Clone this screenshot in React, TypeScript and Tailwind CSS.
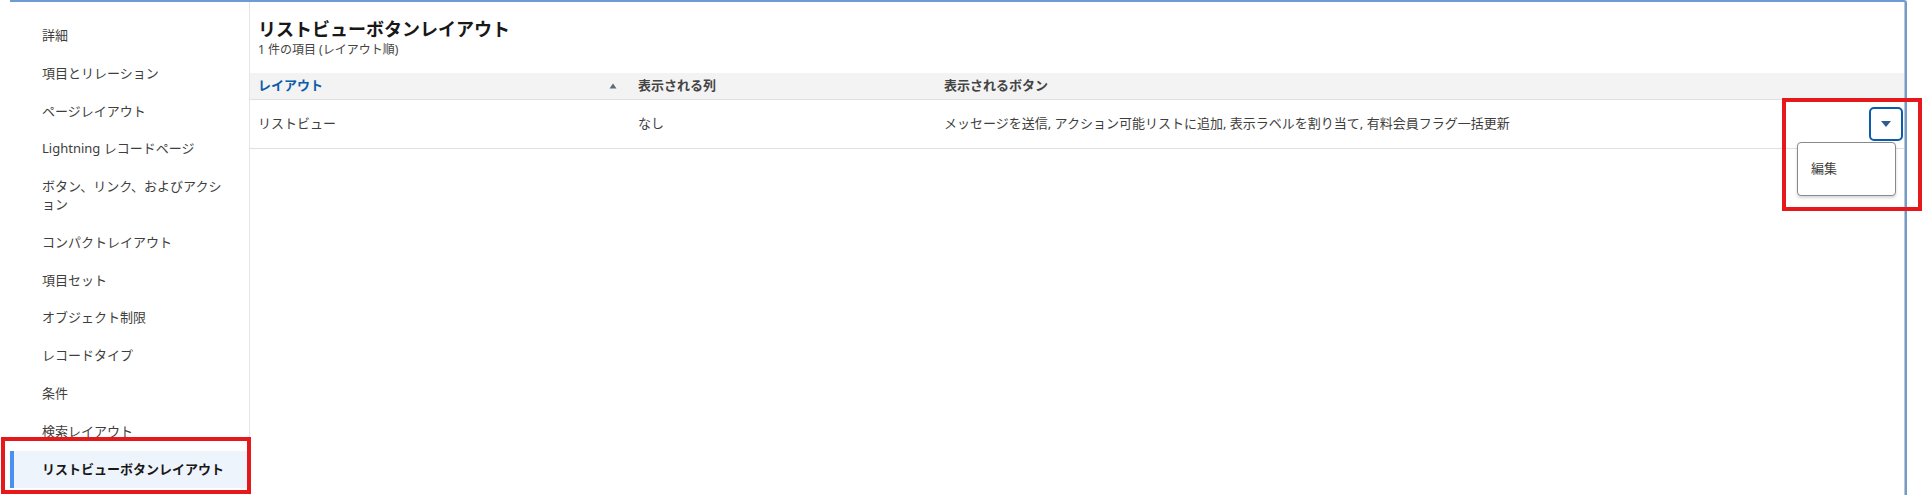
const navItems = [
  '詳細',
  '項目とリレーション',
  'ページレイアウト',
  'Lightning レコードページ',
  'ボタン、リンク、およびアクション',
  'コンパクトレイアウト',
  '項目セット',
  'オブジェクト制限',
  'レコードタイプ',
  '条件',
  '検索レイアウト',
  'リストビューボタンレイアウト',
]

const active = 'リストビューボタンレイアウト'

function SortUp() {
  return (
    <svg width="8" height="6" viewBox="0 0 8 6" className="shrink-0">
      <path d="M4 0.5 L7.5 5.5 L0.5 5.5 Z" fill="#5c6b7a" />
    </svg>
  )
}

export default function App() {
  return (
    <div className="relative w-[1922px] h-[495px] bg-white overflow-hidden font-['Noto_Sans','Noto_Sans_CJK_JP',sans-serif] text-[13px] text-[#3e3e3c]">
      {/* Window frame */}
      <div className="ml-[10px] w-[1897px] h-full border-t-2 border-r-2 border-[#6e9bd2] rounded-tr-[3px]">
        <div className="flex h-full border-r border-[#c4c4c4]">
          {/* Sidebar */}
          <nav className="w-[240px] shrink-0 border-r border-[#e5e5e5] pt-[15px]">
            {navItems.map(item => {
              const isActive = item === active
              return (
                <div
                  key={item}
                  className={
                    isActive
                      ? 'relative bg-[#eef4fc] pl-[32px] pr-[20px] py-[10px] leading-[17px] font-bold text-[#181818]'
                      : 'pl-[32px] pr-[20px] py-[10px] leading-[17.8px]'
                  }
                >
                  {isActive && <span className="absolute left-0 top-0 bottom-0 w-[4px] bg-[#4a90f0]" />}
                  {item}
                </div>
              )
            })}
          </nav>

          {/* Main */}
          <main className="flex-1 min-w-0">
            <div className="pl-[8px] pt-[15px] pb-[15px]">
              <h1 className="text-[18px] font-bold leading-[24px] text-[#181818]">リストビューボタンレイアウト</h1>
              <p className="text-[12px] leading-[16px] text-[#444444] mt-[1px]">1 件の項目 (レイアウト順)</p>
            </div>

            <div className="grid grid-cols-[380px_306px_1fr_44px]">
              {/* Header */}
              <div className="h-[27px] bg-[#f3f3f3] border-b border-[#e0e0e0] flex items-center justify-between pl-[8px] pr-[13px] font-semibold text-[#0b5cab]">
                <span>レイアウト</span>
                <SortUp />
              </div>
              <div className="h-[27px] bg-[#f3f3f3] border-b border-[#e0e0e0] flex items-center pl-[8px] font-semibold text-[#444444]">
                表示される列
              </div>
              <div className="h-[27px] bg-[#f3f3f3] border-b border-[#e0e0e0] flex items-center pl-[8px] font-semibold text-[#444444]">
                表示されるボタン
              </div>
              <div className="h-[27px] bg-[#f3f3f3] border-b border-[#e0e0e0]" />

              {/* Row */}
              <div className="h-[49px] border-b border-[#e0e0e0] flex items-center pl-[8px] text-[#3e3e3c]">リストビュー</div>
              <div className="h-[49px] border-b border-[#e0e0e0] flex items-center pl-[8px] text-[#3e3e3c]">なし</div>
              <div className="h-[49px] border-b border-[#e0e0e0] flex items-center pl-[8px] text-[#3e3e3c]">
                メッセージを送信, アクション可能リストに追加, 表示ラベルを割り当て, 有料会員フラグ一括更新
              </div>
              <div className="h-[49px] border-b border-[#e0e0e0] relative">
                <button className="absolute left-[9px] top-[7px] size-[34px] rounded-[5px] border-2 border-[#0b5cab] bg-white flex items-center justify-center">
                  <svg width="10" height="6" viewBox="0 0 10 6">
                    <path d="M0 0 L10 0 L5 6 Z" fill="#2e5d96" />
                  </svg>
                </button>
                <div className="absolute right-[8px] top-[42px] w-[99px] h-[54px] bg-white border border-[#8a8a8a] rounded-[4px] shadow-[0_2px_3px_rgba(0,0,0,0.16)] flex items-center pl-[13px] text-[#3e3e3c] z-10">
                  編集
                </div>
              </div>
            </div>
          </main>
        </div>
      </div>

      {/* Annotation boxes */}
      <div className="absolute left-[1px] top-[437px] w-[250px] h-[57px] border-4 border-[#e5191c] pointer-events-none" />
      <div className="absolute left-[1782px] top-[98px] w-[140px] h-[113px] border-4 border-[#e5191c] pointer-events-none" />
    </div>
  )
}
